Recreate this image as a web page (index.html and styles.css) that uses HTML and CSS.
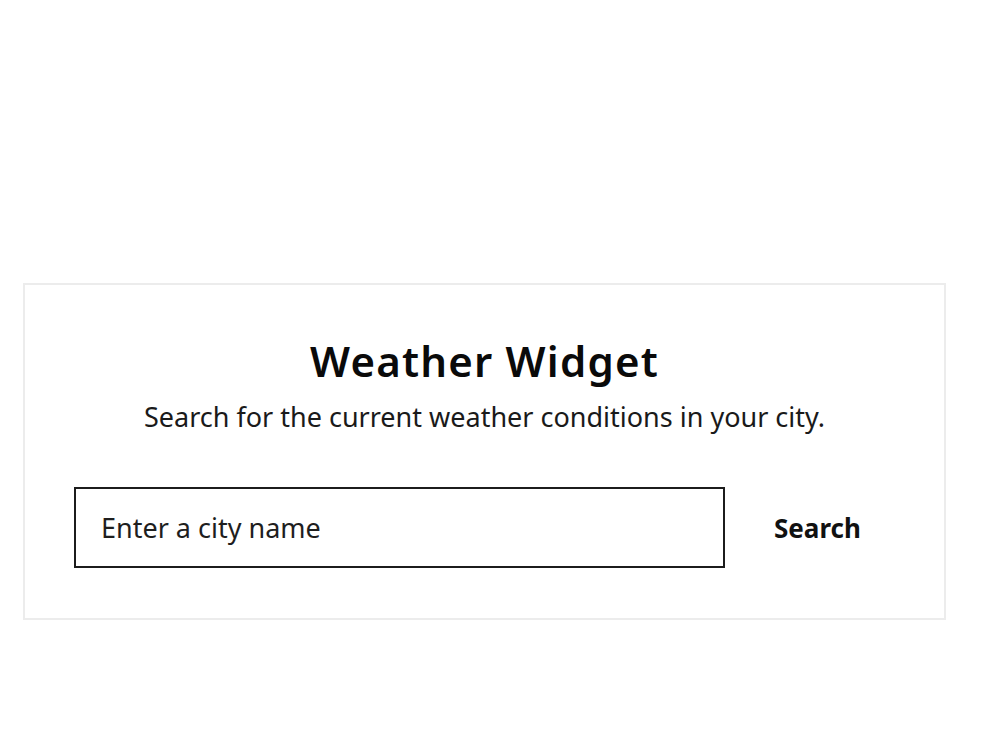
FILE: index.html
```html
<!DOCTYPE html>
<html lang="en">
<head>
<meta charset="utf-8">
<title>Weather Widget</title>
<link rel="stylesheet" href="styles.css">
</head>
<body>
  <main class="page">
    <section class="card">
      <h1 class="title">Weather Widget</h1>
      <p class="subtitle">Search for the current weather conditions in your city.</p>
      <form class="search-row" onsubmit="return false;">
        <input class="city-input" type="text" placeholder="Enter a city name">
        <button class="search-btn" type="submit">Search</button>
      </form>
    </section>
  </main>
</body>
</html>
```

FILE: styles.css
```css
* {
  box-sizing: border-box;
}

body {
  margin: 0;
  background: #ffffff;
  font-family: "Noto Sans", "Open Sans", sans-serif;
  color: #111111;
}

.page {
  padding: 283px 55px 0 23px;
}

.card {
  width: 923px;
  height: 337px;
  border: 2px solid #ececec;
  background: #ffffff;
  padding: 48px 49px 0 49px;
  display: flex;
  flex-direction: column;
  align-items: center;
}

.title {
  margin: 0;
  font-size: 42px;
  font-weight: 600;
  line-height: 56px;
  letter-spacing: 1.2px;
  color: #0a0a0a;
}

.subtitle {
  margin: 11px 0 0;
  font-size: 27px;
  line-height: 34px;
  color: #1a1a1a;
}

.search-row {
  margin-top: 53px;
  width: 100%;
  display: flex;
  align-items: center;
}

.city-input {
  flex: 0 0 651px;
  height: 81px;
  border: 2px solid #1c1c1c;
  padding: 0 25px;
  font-family: inherit;
  font-size: 27px;
  color: #111111;
  outline: none;
}

.city-input::placeholder {
  color: #1e1e1e;
  opacity: 1;
}

.search-btn {
  flex: 0 0 169px;
  height: 81px;
  border: none;
  background: transparent;
  padding: 0 0 0 49px;
  text-align: left;
  font-family: inherit;
  font-size: 26px;
  font-weight: 700;
  color: #111111;
  cursor: pointer;
}
```
